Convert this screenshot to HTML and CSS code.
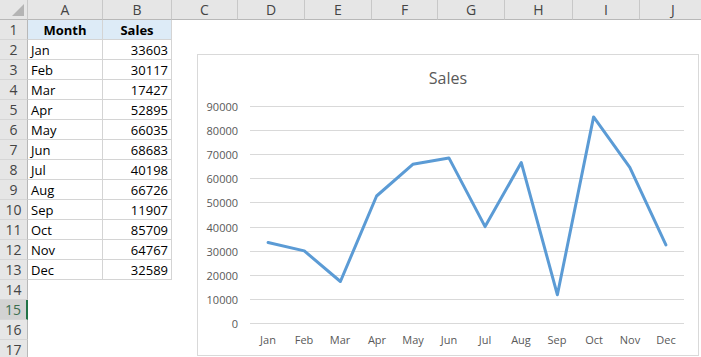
FILE: index.html
```html
<!DOCTYPE html>
<html lang="en">
<head>
  <meta charset="UTF-8" />
  <title>Sales</title>
  <link rel="stylesheet" href="styles.css">
</head>
<body>
  <div class="sheet">
    <div class="grid">
      <div class="corner"><span class="tri"></span></div>
      <div class="colhead">A</div>
      <div class="colhead">B</div>
      <div class="colhead">C</div>
      <div class="colhead">D</div>
      <div class="colhead">E</div>
      <div class="colhead">F</div>
      <div class="colhead">G</div>
      <div class="colhead">H</div>
      <div class="colhead">I</div>
      <div class="colhead">J</div>

      <div class="rowhead">1</div><div class="cell head">Month</div><div class="cell head">Sales</div><div class="blank"></div>
      <div class="rowhead">2</div><div class="cell">Jan</div><div class="cell num">33603</div><div class="blank"></div>
      <div class="rowhead">3</div><div class="cell">Feb</div><div class="cell num">30117</div><div class="blank"></div>
      <div class="rowhead">4</div><div class="cell">Mar</div><div class="cell num">17427</div><div class="blank"></div>
      <div class="rowhead">5</div><div class="cell">Apr</div><div class="cell num">52895</div><div class="blank"></div>
      <div class="rowhead">6</div><div class="cell">May</div><div class="cell num">66035</div><div class="blank"></div>
      <div class="rowhead">7</div><div class="cell">Jun</div><div class="cell num">68683</div><div class="blank"></div>
      <div class="rowhead">8</div><div class="cell">Jul</div><div class="cell num">40198</div><div class="blank"></div>
      <div class="rowhead">9</div><div class="cell">Aug</div><div class="cell num">66726</div><div class="blank"></div>
      <div class="rowhead">10</div><div class="cell">Sep</div><div class="cell num">11907</div><div class="blank"></div>
      <div class="rowhead">11</div><div class="cell">Oct</div><div class="cell num">85709</div><div class="blank"></div>
      <div class="rowhead">12</div><div class="cell">Nov</div><div class="cell num">64767</div><div class="blank"></div>
      <div class="rowhead">13</div><div class="cell">Dec</div><div class="cell num">32589</div><div class="blank"></div>
      <div class="rowhead">14</div><div class="blank wide"></div>
      <div class="rowhead active">15</div><div class="blank wide"></div>
      <div class="rowhead">16</div><div class="blank wide"></div>
      <div class="rowhead">17</div><div class="blank wide"></div>
    </div>

    <!-- chart floats over the sheet like an embedded object -->
    <div class="chart">
      <svg width="500" height="300" viewBox="0 0 500 300">
        <text class="title" x="250" y="29">Sales</text>
        <g class="gridlines">
          <line x1="52" x2="486" y1="51.5" y2="51.5" />
          <line x1="52" x2="486" y1="75.5" y2="75.5" />
          <line x1="52" x2="486" y1="99.5" y2="99.5" />
          <line x1="52" x2="486" y1="123.5" y2="123.5" />
          <line x1="52" x2="486" y1="147.5" y2="147.5" />
          <line x1="52" x2="486" y1="172.5" y2="172.5" />
          <line x1="52" x2="486" y1="196.5" y2="196.5" />
          <line x1="52" x2="486" y1="220.5" y2="220.5" />
          <line x1="52" x2="486" y1="244.5" y2="244.5" />
          <line x1="52" x2="486" y1="268.5" y2="268.5" />
        </g>
        <g class="ylab">
          <text x="40" y="55.5">90000</text>
          <text x="40" y="79.5">80000</text>
          <text x="40" y="103.5">70000</text>
          <text x="40" y="127.5">60000</text>
          <text x="40" y="151.5">50000</text>
          <text x="40" y="176.5">40000</text>
          <text x="40" y="200.5">30000</text>
          <text x="40" y="224.5">20000</text>
          <text x="40" y="248.5">10000</text>
          <text x="40" y="272.5">0</text>
        </g>
        <g class="xlab">
          <text x="70" y="289">Jan</text>
          <text x="106" y="289">Feb</text>
          <text x="142" y="289">Mar</text>
          <text x="179" y="289">Apr</text>
          <text x="215" y="289">May</text>
          <text x="251" y="289">Jun</text>
          <text x="287" y="289">Jul</text>
          <text x="323" y="289">Aug</text>
          <text x="359" y="289">Sep</text>
          <text x="396" y="289">Oct</text>
          <text x="432" y="289">Nov</text>
          <text x="468" y="289">Dec</text>
        </g>
        <polyline class="series" points="70.1,187.5 106.3,195.9 142.4,226.5 178.6,141 214.8,109.3 250.9,102.9 287.1,171.6 323.3,107.6 359.4,239.8 395.6,61.9 431.8,112.3 467.9,189.9" />
      </svg>
    </div>
  </div>
</body>
</html>
```

FILE: styles.css
```css
:root {
  --hdr-bg: #e6e6e6;
  --hdr-line: #c8c8c8;
  --hdr-text: #444;
  --cell-line: #d4d4d4;
  --head-fill: #ddebf7;
  --excel-green: #217346;
  --series: #5b9bd5;
}

body {
  margin: 0;
  background: #fff;
  font-family: "Open Sans", "Noto Sans", sans-serif;
  color: #000;
}

.sheet {
  position: relative;
  width: 701px;
  height: 357px;
  overflow: hidden;
}

.grid {
  display: grid;
  grid-template-columns: 28px 75px 69px 66px 67px 67px 66px 67px 68px 67px 67px;
  grid-auto-rows: 20px;
}

.corner {
  position: relative;
  background: var(--hdr-bg);
  border-right: 1px solid var(--hdr-line);
  border-bottom: 1px solid #b8b8b8;
}

.tri {
  position: absolute;
  right: 3px;
  bottom: 3px;
  width: 0;
  height: 0;
  border-left: 12px solid transparent;
  border-bottom: 12px solid #b4b4b4;
}

.colhead {
  background: var(--hdr-bg);
  border-right: 1px solid var(--hdr-line);
  border-bottom: 1px solid #b8b8b8;
  color: var(--hdr-text);
  font-size: 14px;
  display: flex;
  align-items: center;
  justify-content: center;
}

.rowhead {
  background: var(--hdr-bg);
  border-right: 1px solid #b8b8b8;
  border-bottom: 1px solid #d6d6d6;
  color: var(--hdr-text);
  font-size: 14px;
  display: flex;
  align-items: center;
  justify-content: center;
}

.rowhead.active {
  background: #d2d2d2;
  color: #3c6e50;
  border-right: 2px solid var(--excel-green);
}

.cell {
  border-right: 1px solid var(--cell-line);
  border-bottom: 1px solid var(--cell-line);
  font-size: 13px;
  padding: 0 3px;
  display: flex;
  align-items: center;
}

.cell.head {
  background: var(--head-fill);
  font-weight: bold;
  justify-content: center;
}

.cell.num {
  justify-content: flex-end;
}

.blank {
  grid-column: span 8;
}

.blank.wide {
  grid-column: span 10;
}

.chart {
  position: absolute;
  left: 197px;
  top: 54px;
  width: 500px;
  height: 300px;
  border: 1px solid #d9d9d9;
  background: #fff;
}

.chart svg {
  display: block;
}

.title {
  font-size: 16px;
  fill: #595959;
  text-anchor: middle;
}

.gridlines line {
  stroke: #d9d9d9;
  stroke-width: 1;
}

.ylab text {
  font-size: 11px;
  fill: #595959;
  text-anchor: end;
}

.xlab text {
  font-size: 11px;
  fill: #595959;
  text-anchor: middle;
}

.series {
  fill: none;
  stroke: var(--series);
  stroke-width: 3;
  stroke-linejoin: round;
  stroke-linecap: round;
}
```
